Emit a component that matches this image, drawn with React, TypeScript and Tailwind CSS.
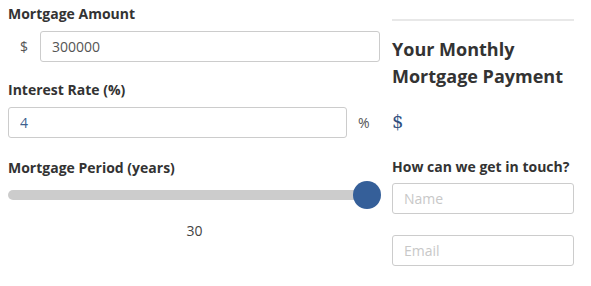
import React from "react";

const font = { fontFamily: '"Open Sans", "Liberation Sans", sans-serif' };

function Label({ children }: { children: React.ReactNode }) {
  return <div className="text-[14px] leading-[20px] font-bold text-[#333]">{children}</div>;
}

export default function App() {
  return (
    <div className="flex gap-[11px] pl-2 bg-white w-[591px] h-[286px]" style={font}>
      {/* calculator inputs */}
      <div className="w-[373px] flex flex-col pt-[4px]">
        <Label>Mortgage Amount</Label>
        <div className="flex items-center mt-[7px]">
          <span className="w-[32px] pl-[12px] text-[14px] text-[#555]">$</span>
          <input
            defaultValue="300000"
            className="w-[340px] h-[31px] border border-[#ccc] rounded-[3px] px-[11px] text-[14px] text-[#555] outline-none"
          />
        </div>
        <div className="mt-[18px]">
          <Label>Interest Rate (%)</Label>
        </div>
        <div className="flex items-center mt-[7px]">
          <input
            defaultValue="4"
            className="w-[339px] h-[31px] border border-[#ccc] rounded-[3px] px-[11px] text-[14px] text-[#3d5f8f] outline-none"
          />
          <span className="ml-[11px] text-[14px] text-[#555]">%</span>
        </div>
        <div className="mt-[20px]">
          <Label>Mortgage Period (years)</Label>
        </div>
        <div className="relative mt-[12px] h-[10px]">
          <div className="h-[10px] w-[362px] rounded-full bg-[#cccccc]" />
          <div className="absolute right-0 top-[-9px] w-[28px] h-[28px] rounded-full bg-[#355f99]" />
        </div>
        <div className="mt-[20px] text-center text-[14px] text-[#444]">30</div>
      </div>

      {/* result + contact */}
      <div className="w-[182px] flex flex-col pt-[19px]">
        <div className="h-[2px] bg-[#e8e8e8]" />
        <h2 className="mt-[15px] text-[18px] leading-[27px] font-bold text-[#333]">
          Your Monthly
          <br />
          Mortgage Payment
        </h2>
        <div className="mt-[20px] text-[18px] leading-[24px] text-[#2f4f7f]" style={{ fontFamily: '"DejaVu Serif", serif' }}>
          $
        </div>
        <div className="mt-[23px]">
          <Label>How can we get in touch?</Label>
        </div>
        <input
          placeholder="Name"
          className="mt-[6px] w-[182px] h-[31px] border border-[#ccc] rounded-[3px] px-[11px] text-[14px] text-[#555] placeholder:text-[#c8c8c8] outline-none"
        />
        <input
          placeholder="Email"
          className="mt-[21px] w-[182px] h-[31px] border border-[#ccc] rounded-[3px] px-[11px] text-[14px] text-[#555] placeholder:text-[#c8c8c8] outline-none"
        />
      </div>
    </div>
  );
}
